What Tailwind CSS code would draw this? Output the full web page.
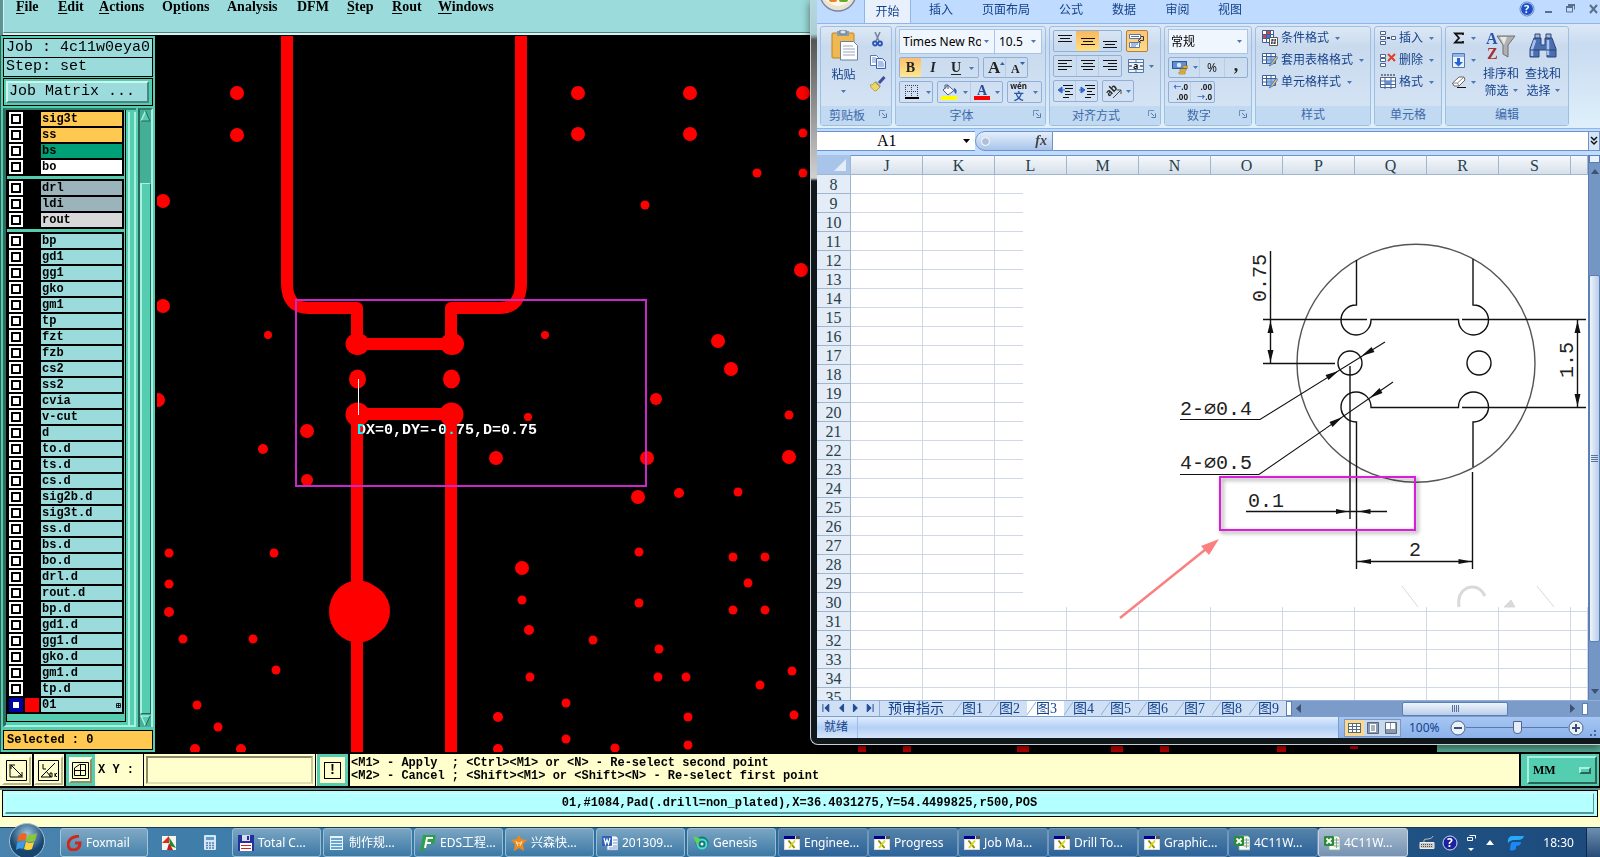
<!DOCTYPE html>
<html lang="zh-CN">
<head>
    <meta charset="UTF-8" />
    <meta name="viewport" content="width=device-width, initial-scale=1" />
    <title>Genesis - Graphic Editor</title>
    <script src="https://cdn.jsdelivr.net/npm/@tailwindcss/browser@4"></script>
</head>
<body class="h-screen flex flex-col overflow-hidden bg-black">

<!-- shared icons -->
<svg class="hidden">
    <symbol id="caret" viewBox="0 0 5 3"><path d="M0 0h5L2.500 3z" fill="#4a78b5"/></symbol>
    <symbol id="launcher" viewBox="0 0 8 8"><path d="M.5 6V.5H6" fill="none" stroke="#6a8fc0"/><path d="M3 3l3 3M7.500 3.500v4h-4" fill="none" stroke="#5479ab"/></symbol>
    <symbol id="xwin" viewBox="0 0 16 14"><path d="M0 0h16v14H0z" fill="#d8d8d8"/><path d="M0 0h11v3H0z" fill="#000090"/><path d="M12 0h4v3h-4z" fill="#555"/><path d="M1 3.500h14V13H1z" fill="#fff"/><path d="M4.500 4.500l6 7.500" stroke="#8b8b00" stroke-width="2"/><path d="M11 4.500L5 12" stroke="#d8d820" stroke-width="2"/></symbol>
    <symbol id="excel" viewBox="0 0 16 16"><path d="M5 1h9l2 2v12H5z" fill="#f4f8f4" stroke="#8fae92" stroke-width=".8"/><path d="M10 5h5M10 8h5M10 11h5M12.500 3v10" stroke="#88a88c"/><rect y="1" width="10" height="10" rx="1" fill="#2c8a3a"/><path d="M2.500 3.500l5 5M7.500 3.500l-5 5" stroke="#fff" stroke-width="1.800"/></symbol>
    <symbol id="tablepen" viewBox="0 0 16 14"><path d="M.5.500h13v10H.5z" fill="#fff" stroke="#3c5f94"/><path d="M0 3.500h14M0 7h14M4.500 0v11M9 0v11" stroke="#3c5f94"/><path d="M5 4h8v6H5z" fill="#6d9ce0" fill-opacity=".7"/><path d="M14.500 3L10 9l-3 4 4-2 4.500-6z" fill="#f0c850" stroke="#3a6ec0" stroke-width=".8"/></symbol>
</svg>

<div class="flex-1 min-h-0 flex flex-col relative">
    <!-- menu bar -->
    <nav class="h-[36px] shrink-0 bg-[#9bdbdb] border-l-3 border-[#5c9494] border-b border-b-black">
        <div class="h-[35px] border-b-2 border-[#d8f2f2]">
            <div class="h-[33px] border-b border-b-[#4c8484] border-l border-l-[#d8f2f2] pl-[12px] grid grid-cols-[42px_41px_63px_65px_70px_50px_45px_46px_auto] items-start justify-start leading-[14px] text-[14px] font-bold font-['Liberation_Serif',serif] text-black">
                <button class="text-left"><u class="underline-offset-2">F</u>ile</button>
                <button class="text-left"><u class="underline-offset-2">E</u>dit</button>
                <button class="text-left"><u class="underline-offset-2">A</u>ctions</button>
                <button class="text-left">O<u class="underline-offset-2">p</u>tions</button>
                <button class="text-left">Analysis</button>
                <button class="text-left">DFM</button>
                <button class="text-left"><u class="underline-offset-2">S</u>tep</button>
                <button class="text-left"><u class="underline-offset-2">R</u>out</button>
                <button class="text-left"><u class="underline-offset-2">W</u>indows</button>
            </div>
        </div>
    </nav>

    <div class="flex-1 min-h-0 flex">
        <!-- layer list -->
        <aside class="w-[155px] shrink-0 bg-[#55cdb0] border-l border-[#2d5f54] px-[2px] py-[2px] flex flex-col font-['Liberation_Mono',monospace] text-black">
            <div class="border border-black bg-[#9bdbdb] text-[15px] leading-[18px]">
                <div class="h-[19px] pl-[2px] border-b border-black whitespace-pre">Job : 4c11w0eya0</div>
                <div class="h-[18px] pl-[2px] whitespace-pre">Step: set</div>
            </div>
            <div class="mt-[1px] border border-black p-[2px] pr-[3px]">
                <button class="block w-full h-[22px] text-left text-[15px] leading-[18px] pl-[1px] bg-[#9bdbdb] border-2 border-t-[#cdf5ee] border-l-[#cdf5ee] border-r-[#4c8484] border-b-[#4c8484]">Job Matrix ...</button>
            </div>
            <div class="flex-1 min-h-0 mt-[2px] flex">
                <div class="flex-1 min-w-0 flex border-t-2 border-t-[#2f7d6b] border-l-3 border-l-[#2f6a5c] border-b-2 border-b-[#a8f0e0]">
                    <div class="w-[122px] flex flex-col border border-t-0 border-black mb-[3px]" id="layers"></div>
                    <div class="w-[8px] ml-[2px] mt-[2px] border-x-2 border-[#a8f0e0]"></div>
                </div>
                <div class="w-[15px] ml-[2px] bg-[#45ae96] border-l-2 border-l-[#2a6657] border-r-2 border-r-[#a8f0e0] border-t-2 border-t-[#2f7d6b] flex flex-col">
                    <svg class="w-[11px] h-[12px] shrink-0" viewBox="0 0 11 12"><path d="M5.500 1L10 11H1z" fill="#55cdb0"/><path d="M5.500 1L1 11" stroke="#a8f0e0" stroke-width="1.500"/><path d="M5.500 1L10 11H1" fill="none" stroke="#2a6657"/></svg>
                    <div class="h-[61px]"></div>
                    <div class="flex-1 bg-[#55cdb0] border-t border-l-2 border-t-[#a8f0e0] border-l-[#a8f0e0] border-r border-r-[#2a6657] border-b border-b-[#2a6657]"></div>
                    <svg class="w-[11px] h-[13px] shrink-0" viewBox="0 0 11 13"><path d="M5.500 12L10 2H1z" fill="#55cdb0"/><path d="M5.500 12L1 2h9" fill="none" stroke="#a8f0e0" stroke-width="1.500"/><path d="M5.500 12L10 2" stroke="#2a6657"/></svg>
                </div>
            </div>
            <div class="h-[20px] mt-[3px] border border-black bg-[#ffc850] text-[12px] leading-[18px] font-bold pl-[3px]">Selected : 0</div>
        </aside>

        <!-- board view -->
        <main class="flex-1 min-w-0 ml-[2px] bg-black">
            <svg class="block w-full h-full">
                <g transform="translate(-157 -36)">
                    <g fill="none" stroke="#f00" stroke-width="12" stroke-linejoin="round">
                        <path d="M287 30V283Q287 308 308 308H357V344H451V308H500Q521 308 521 283V30"/>
                        <path d="M357 760V414H451V760"/>
                    </g>
                    <g fill="#f00">
                        <ellipse cx="357.500" cy="344" rx="12" ry="11"/><ellipse cx="452" cy="344" rx="12" ry="11"/>
                        <ellipse cx="357.500" cy="379" rx="8.500" ry="9.500"/><ellipse cx="451.500" cy="379" rx="8.500" ry="9.500"/>
                        <circle cx="357.500" cy="414.500" r="12"/><circle cx="451.500" cy="414.500" r="12"/>
                        <ellipse cx="358" cy="611.500" rx="29" ry="31"/><circle cx="362" cy="611" r="28"/>
                        <g id="vias"></g>
                    </g>
                    <g fill="#b40000">
                        <path d="M858 746h8v6h-8zM903 746h8v6h-8zM1017 746h12v6h-12zM1111 746h12v6h-12zM1160 746h9v6h-9zM1277 746h9v6h-9zM1350 746h8v3h-8z"/>
                    </g>
                    <rect x="1437" y="735" width="2000" height="17" fill="#55a892"/>
                    <rect x="296" y="300" width="350" height="186" fill="none" stroke="#c828c8" stroke-width="2"/>
                    <path d="M358.500 379v36" stroke="#fff"/>
                    <text x="357" y="434" fill="#fff" class="mix-blend-difference text-[15px] font-bold font-['Liberation_Mono',monospace]">DX=0,DY=-0.75,D=0.75</text>
                </g>
            </svg>
        </main>
    </div>

    <!-- spreadsheet window -->
    <section class="absolute left-[810px] right-0 top-0 h-[745px] pl-[6px] pb-[6px] flex flex-col rounded-bl-lg border-l border-b border-[#c8d0d4] bg-[#10181c] shadow-[0_2px_8px_#0008] bg-[linear-gradient(#b4d8e0_0,#a8d0d4_34px,#555_40px,#d0d0d0_178px,#10181c_181px)] font-['Noto_Sans','Noto_Sans_CJK_SC',sans-serif] text-[12px] text-[#15428b] overflow-hidden">
        <div class="flex-1 min-h-0 flex flex-col bg-[#bfdbff]">
            <!-- ribbon tabs -->
            <div class="h-[23px] shrink-0 flex items-start leading-[19px]">
                <div class="w-[47px] h-[23px] shrink-0 overflow-hidden">
                    <svg class="block w-[47px] h-[23px]" viewBox="0 0 47 23"><circle cx="21" cy="-7" r="18" fill="#e9e3d2" stroke="#7d86a0" stroke-width="1.500"/><circle cx="21" cy="-9" r="15" fill="#fbf6e6"/><rect x="12" y="-6" width="8" height="8" rx="2" fill="#f08020"/><rect x="22" y="-7" width="9" height="9" rx="2" fill="#6aa82c"/></svg>
                </div>
                <button class="w-[47px] h-[23px] leading-[19px] bg-[#e8f1fb] border-x border-[#8fb6e6]">开始</button>
                <button class="w-[60px] leading-[19px]">插入</button>
                <button class="w-[70px] leading-[19px]">页面布局</button>
                <button class="w-[60px] leading-[19px]">公式</button>
                <button class="w-[46px] leading-[19px]">数据</button>
                <button class="w-[61px] leading-[19px]">审阅</button>
                <button class="w-[44px] leading-[19px]">视图</button>
                <div class="flex-1"></div>
                <svg class="w-[82px] h-[20px] shrink-0" viewBox="0 0 82 20">
                    <circle cx="9" cy="9" r="6.500" fill="#1b50c8" stroke="#fff"/><circle cx="9" cy="9" r="7" fill="none" stroke="#5b80c0"/>
                    <text x="6" y="13" fill="#fff" class="text-[11px] font-bold">?</text>
                    <path d="M27 12h7" stroke="#5a6f8c" stroke-width="2"/>
                    <path d="M50.500 5.500h6v4M48.500 7h6v5h-6z" fill="none" stroke="#5a6f8c"/><path d="M48 7h7M50 5h7" stroke="#5a6f8c" stroke-width="2"/>
                    <path d="M72 5l7 8M79 5l-7 8" stroke="#5a6f8c" stroke-width="2"/>
                </svg>
            </div>

            <!-- ribbon -->
            <div class="h-[106px] shrink-0 border-t border-b border-t-[#8fb6e6] border-b-[#8fb6e6] bg-linear-to-b from-[#dce8f6] via-[#c8dbf0] via-20% to-[#dff0fb] pl-[3px] pt-[2px] pb-[2px] flex gap-[3px]">
                <div class="w-[72px] shrink-0 flex flex-col border border-[#9fbfe2] rounded-[3px] bg-linear-to-b from-[#dde8f5] via-[#c9daee] via-20% to-[#d7e6f6]">
                    <div class="flex-1 flex pt-[3px]">
                        <button class="w-[45px] flex flex-col items-center leading-[14px]">
                            <svg class="w-[28px] h-[31px] ml-[2px]" viewBox="0 0 28 31"><rect x="1" y="3" width="22" height="25" rx="1" fill="#f0b850" stroke="#b98428"/><path d="M6 1h12v5H6z" fill="#8c9cac"/><path d="M9 0h6v4H9z" fill="#dde4ea" stroke="#65758a"/><path d="M9.500 11.500h13l4 4v14.500h-17z" fill="#fff" stroke="#6b7f9e"/><path d="M12 16h10M12 19h12M12 22h12M12 25h12" stroke="#9aa8bc"/></svg>
                            <span class="mt-[7px]">粘贴</span>
                            <svg class="w-[5px] h-[3px] mt-[8px]"><use href="#caret"/></svg>
                        </button>
                        <div class="flex flex-col gap-[6px] pl-[4px] pt-[2px]">
                            <button aria-label="剪切"><svg class="w-[16px] h-[16px]" viewBox="0 0 16 16"><path d="M5 0l4 9M10 0L6 9" stroke="#73839a" stroke-width="1.500"/><circle cx="5" cy="11.500" r="2" fill="none" stroke="#2b55b8" stroke-width="1.800"/><circle cx="10" cy="11.500" r="2" fill="none" stroke="#2b55b8" stroke-width="1.800"/></svg></button>
                            <button aria-label="复制"><svg class="w-[16px] h-[16px]" viewBox="0 0 16 16"><path d="M.5 1.500h6l2 2v8h-8z" fill="#fff" stroke="#5577b8"/><path d="M6.500 4.500h6l3 3v7h-9z" fill="#e8f0fc" stroke="#3c61ac"/><path d="M2 4h4M2 6h4M2 8h4M8 8h5M8 10h6M8 12h6" stroke="#6f8fd0"/></svg></button>
                            <button aria-label="格式刷"><svg class="w-[16px] h-[16px]" viewBox="0 0 16 16"><path d="M14.500 1L9 7" stroke="#3d4f9e" stroke-width="3"/><path d="M6 5l5 5-2 2-5-5z" fill="#98a3b5"/><path d="M5 6l5 5-4 4c-2 0-5-3-6-6 2 0 4-1 5-3z" fill="#ecd860" stroke="#a08a28" stroke-width=".7"/></svg></button>
                        </div>
                    </div>
                    <div class="h-[19px] bg-[#c1d9f1] text-[#3e6aaa] flex items-center"><span class="flex-1 text-center leading-[18px] pr-[6px]">剪贴板</span><svg class="w-[8px] h-[8px] mr-[4px] mb-[4px]"><use href="#launcher"/></svg></div>
                </div>

                <div class="w-[151px] shrink-0 flex flex-col border border-[#9fbfe2] rounded-[3px] bg-linear-to-b from-[#dde8f5] via-[#c9daee] via-20% to-[#d7e6f6]">
                    <div class="flex-1 flex flex-col gap-[3px] pt-[2px] px-[3px]">
                        <div class="h-[25px] flex border border-[#a9c5e6] bg-[#f0f6fd] text-black">
                            <label class="w-[95px] flex items-center border-r border-[#a9c5e6]"><select aria-label="字体" class="appearance-none w-[81px] pl-[3px] overflow-hidden"><option>Times New Roman</option></select><svg class="w-[5px] h-[3px] ml-[3px]"><use href="#caret"/></svg></label>
                            <label class="flex-1 flex items-center"><select aria-label="字号" class="appearance-none w-[35px] pl-[4px]"><option>10.5</option></select><svg class="w-[5px] h-[3px] ml-[1px]"><use href="#caret"/></svg></label>
                        </div>
                        <div class="h-[21px] flex gap-[4px] font-['Liberation_Serif',serif] text-[#222]">
                            <div class="w-[80px] flex border border-[#8fafd8] rounded-[2px]">
                                <button class="w-[21px] bg-linear-to-b from-[#f8c070] to-[#fde890] font-bold text-[14px] leading-[18px]">B</button>
                                <button class="w-[24px] italic font-bold text-[14px] leading-[18px]">I</button>
                                <button class="w-[22px] font-bold text-[14px] leading-[18px] underline underline-offset-2">U</button>
                                <svg class="w-[5px] h-[3px] mt-[9px] ml-[2px]"><use href="#caret"/></svg>
                            </div>
                            <div class="w-[45px] flex border border-[#8fafd8] rounded-[2px]">
                                <button class="w-[22px] flex font-bold text-[17px] leading-[20px] pl-[4px] border-r border-[#b6cde8]">A<svg class="w-[5px] h-[3px] mt-[4px]" viewBox="0 0 5 3"><path d="M0 3h5L2.500 0z" fill="#2c5fb0"/></svg></button>
                                <button class="flex font-bold text-[12px] leading-[22px] pl-[5px]">A<svg class="w-[5px] h-[3px] mt-[4px]" viewBox="0 0 5 3"><path d="M0 0h5L2.500 3z" fill="#2c5fb0"/></svg></button>
                            </div>
                        </div>
                        <div class="h-[22px] flex gap-[4px]">
                            <button aria-label="边框" class="w-[34px] flex items-center pl-[5px] gap-[7px] border border-[#8fafd8] rounded-[2px]"><svg class="w-[14px] h-[14px]" viewBox="0 0 14 14"><path d="M.5 0v13M6.500 0v13M12.500 0v13M0 .5h13M0 6.500h13" stroke="#33415e" stroke-dasharray="1 1"/><path d="M0 13h14" stroke="#000" stroke-width="2"/></svg><svg class="w-[5px] h-[3px]"><use href="#caret"/></svg></button>
                            <div class="w-[67px] flex border border-[#8fafd8] rounded-[2px]">
                                <button aria-label="填充颜色" class="w-[33px] flex items-center gap-[5px] pl-[3px] border-r border-[#b6cde8]"><svg class="w-[17px] h-[16px]" viewBox="0 0 17 16"><path d="M7 1.500l6 5-6 4.500-5-5z" fill="#f5f8fc" stroke="#4b5f84"/><path d="M4 5V1h3v4" fill="none" stroke="#4b5f84"/><path d="M13 4c3 1 3 4 2 6-2-1-2-4-2-6z" fill="#2e60b8"/><path d="M0 12h16v4H0z" fill="#ff0"/></svg><svg class="w-[5px] h-[3px]"><use href="#caret"/></svg></button>
                                <button aria-label="字体颜色" class="flex items-center gap-[5px] pl-[3px]"><svg class="w-[16px] h-[16px] overflow-visible" viewBox="0 0 16 16"><text x="3" y="11" fill="#27509a" class="font-bold text-[14px] font-['Liberation_Serif',serif]">A</text><path d="M0 12h16v4H0z" fill="#f00"/></svg><svg class="w-[5px] h-[3px]"><use href="#caret"/></svg></button>
                            </div>
                            <button class="w-[35px] flex items-center pl-[2px] gap-[4px] border border-[#8fafd8] rounded-[2px]"><span class="flex flex-col items-center text-[#222]"><span class="text-[8px] leading-[8px] font-bold">wén</span><span class="text-[10px] leading-[12px] font-bold text-[#2654a8]">文</span></span><svg class="w-[5px] h-[3px] ml-[2px]"><use href="#caret"/></svg></button>
                        </div>
                    </div>
                    <div class="h-[19px] bg-[#c1d9f1] text-[#3e6aaa] flex items-center"><span class="flex-1 text-center leading-[18px] pr-[6px]">字体</span><svg class="w-[8px] h-[8px] mr-[4px] mb-[4px]"><use href="#launcher"/></svg></div>
                </div>

                <div class="w-[112px] shrink-0 flex flex-col border border-[#9fbfe2] rounded-[3px] bg-linear-to-b from-[#dde8f5] via-[#c9daee] via-20% to-[#d7e6f6]">
                    <div class="flex-1 flex flex-col gap-[3px] pt-[3px] pl-[3px]">
                        <div class="flex gap-[4px] h-[22px]">
                            <div class="w-[69px] flex border border-[#8fafd8] rounded-[2px]">
                                <button aria-label="顶端对齐" class="w-[22px] pl-[4px]"><svg class="w-[14px] h-[18px]" viewBox="0 0 14 18"><path d="M0 3.500h14M2 6.500h10M0 9.500h14" stroke="#111"/></svg></button>
                                <button aria-label="垂直居中" class="w-[23px] pl-[5px] bg-linear-to-b from-[#f8b860] to-[#fde080]"><svg class="w-[14px] h-[18px]" viewBox="0 0 14 18"><path d="M0 6.500h14M2 9.500h10M0 12.500h14" stroke="#111"/></svg></button>
                                <button aria-label="底端对齐" class="w-[22px] pl-[4px]"><svg class="w-[14px] h-[18px]" viewBox="0 0 14 18"><path d="M0 9.500h14M2 12.500h10M0 15.500h14" stroke="#111"/></svg></button>
                            </div>
                            <button aria-label="自动换行" class="w-[22px] pl-[2px] border border-[#b08038] rounded-[2px] bg-linear-to-b from-[#fbc478] to-[#fdd98c]"><svg class="w-[16px] h-[16px]" viewBox="0 0 16 16"><path d="M.5 1.500h11v4H.5zM.5 9.500h10v5H.5z" fill="#fff" stroke="#5479ab"/><path d="M2 3.500h8M2 11h7M2 13h5" stroke="#5479ab"/><path d="M12 3.500h2.500v4H11" fill="none" stroke="#333"/><path d="M12 5l-3 2.500 3 2" fill="none" stroke="#333"/></svg></button>
                        </div>
                        <div class="flex gap-[4px] h-[22px]">
                            <div class="w-[69px] flex border border-[#8fafd8] rounded-[2px]">
                                <button aria-label="左对齐" class="w-[22px] pl-[4px]"><svg class="w-[14px] h-[18px]" viewBox="0 0 14 18"><path d="M0 3.500h14M0 6.500h9M0 9.500h14M0 12.500h9" stroke="#111"/></svg></button>
                                <button aria-label="居中" class="w-[23px] pl-[4px] border-x border-[#b6cde8]"><svg class="w-[14px] h-[18px]" viewBox="0 0 14 18"><path d="M0 3.500h14M2 6.500h10M0 9.500h14M2 12.500h10" stroke="#111"/></svg></button>
                                <button aria-label="右对齐" class="w-[22px] pl-[4px]"><svg class="w-[14px] h-[18px]" viewBox="0 0 14 18"><path d="M0 3.500h14M5 6.500h9M0 9.500h14M5 12.500h9" stroke="#111"/></svg></button>
                            </div>
                            <button aria-label="合并后居中" class="flex items-center gap-[5px] pl-[2px]"><svg class="w-[16px] h-[14px]" viewBox="0 0 16 14"><path d="M.5.500h15v13H.5zM.5 3.500h15M.5 10.500h15M8 0v3.500M8 10.500V14" fill="#eef4fc" stroke="#5479ab"/><path d="M1 7h3M12 7h3" stroke="#111"/><text x="5" y="10" fill="#111" class="text-[9px] font-bold">a</text></svg><svg class="w-[5px] h-[3px]"><use href="#caret"/></svg></button>
                        </div>
                        <div class="flex gap-[4px] h-[22px]">
                            <div class="w-[45px] flex border border-[#8fafd8] rounded-[2px]">
                                <button aria-label="减少缩进量" class="w-[22px] pl-[3px] border-r border-[#b6cde8]"><svg class="w-[16px] h-[16px]" viewBox="0 0 16 16"><path d="M6 2.500h10M8 5.500h8M8 8.500h5M8 11.500h8M6 14.500h6" stroke="#111"/><path d="M5 4L1 7l4 3zM4 7h4" fill="#2f66c8" stroke="#2f66c8"/></svg></button>
                                <button aria-label="增加缩进量" class="pl-[3px]"><svg class="w-[16px] h-[16px]" viewBox="0 0 16 16"><path d="M6 2.500h10M8 5.500h8M8 8.500h5M8 11.500h8M6 14.500h6" stroke="#111"/><path d="M2 4l4 3-4 3zM0 7h3" fill="#2f66c8" stroke="#2f66c8"/></svg></button>
                            </div>
                            <button aria-label="方向" class="w-[32px] flex items-center pl-[4px] gap-[3px] border border-[#8fafd8] rounded-[2px]"><svg class="w-[16px] h-[18px] overflow-visible" viewBox="0 0 16 18"><text x="-2" y="11" transform="rotate(-45 5 8)" fill="#222" class="text-[10px] font-bold">ab</text><path d="M6 16l8-8M14 12V8h-4" fill="none" stroke="#444"/></svg><svg class="w-[5px] h-[3px]"><use href="#caret"/></svg></button>
                        </div>
                    </div>
                    <div class="h-[19px] bg-[#c1d9f1] text-[#3e6aaa] flex items-center"><span class="flex-1 text-center leading-[18px] pr-[6px]">对齐方式</span><svg class="w-[8px] h-[8px] mr-[4px] mb-[4px]"><use href="#launcher"/></svg></div>
                </div>

                <div class="w-[88px] shrink-0 flex flex-col border border-[#9fbfe2] rounded-[3px] bg-linear-to-b from-[#dde8f5] via-[#c9daee] via-20% to-[#d7e6f6]">
                    <div class="flex-1 flex flex-col gap-[3px] pt-[2px] px-[3px]">
                        <label class="h-[25px] flex items-center border border-[#a9c5e6] bg-[#f0f6fd] text-black"><select aria-label="数字格式" class="appearance-none w-[68px] pl-[2px]"><option>常规</option></select><svg class="w-[5px] h-[3px]"><use href="#caret"/></svg></label>
                        <div class="h-[21px] flex border border-[#8fafd8] rounded-[2px] text-[#222]">
                            <button aria-label="会计数字格式" class="w-[31px] flex items-center pl-[3px] gap-[5px] border-r border-[#b6cde8]"><svg class="w-[16px] h-[16px]" viewBox="0 0 16 16"><rect x=".5" y="1.500" width="14" height="7" fill="#5e8fd8" stroke="#2f5498"/><circle cx="7" cy="5" r="2.200" fill="#dbe8fb"/><path d="M8 9h6v2H8zM7 12h6v2H7zM11 6h5v2h-5z" fill="#f2c648" stroke="#a97c1c" stroke-width=".7"/></svg><svg class="w-[5px] h-[3px]"><use href="#caret"/></svg></button>
                            <button class="w-[25px] leading-[19px] border-r border-[#b6cde8]">%</button>
                            <button class="w-[22px] h-[19px] leading-[8px] pb-[6px] font-bold font-['Liberation_Serif',serif] text-[18px]">,</button>
                        </div>
                        <div class="h-[22px] w-[47px] flex border border-[#8fafd8] rounded-[2px] text-[#222] font-bold text-[8px] leading-[10px]">
                            <button class="w-[22px] border-r border-[#b6cde8] text-right pr-[2px]"><span class="text-[#2f66c8]">←</span>.0<br>.00</button>
                            <button class="w-[22px] text-right pr-[1px]">.00<br><span class="text-[#2f66c8]">→</span>.0</button>
                        </div>
                    </div>
                    <div class="h-[19px] bg-[#c1d9f1] text-[#3e6aaa] flex items-center"><span class="flex-1 text-center leading-[18px] pr-[6px]">数字</span><svg class="w-[8px] h-[8px] mr-[4px] mb-[4px]"><use href="#launcher"/></svg></div>
                </div>

                <div class="w-[116px] shrink-0 flex flex-col border border-[#9fbfe2] rounded-[3px] bg-linear-to-b from-[#dde8f5] via-[#c9daee] via-20% to-[#d7e6f6]">
                    <div class="flex-1 flex flex-col pl-[6px] items-start">
                        <button class="h-[22px] flex items-center gap-[3px]"><svg class="w-[16px] h-[16px]" viewBox="0 0 16 16"><path d="M.5.500h11v12H.5z" fill="#fff" stroke="#3c5f94"/><path d="M0 4.500h12M0 8.500h12M4.500 0v13M8.500 0v13" stroke="#3c5f94"/><path d="M5 1h3v3H5zM1 5h3v3H1z" fill="#d84040"/><path d="M5 5h3v3H5z" fill="#4070d0"/><path d="M7.500 7.500h8v8h-8z" fill="#fff" stroke="#555"/><path d="M9 10h5M9 13h5M10.500 9l-1 5M13.500 9l-1 5" stroke="#333"/></svg>条件格式<svg class="w-[5px] h-[3px] ml-[3px]"><use href="#caret"/></svg></button>
                        <button class="h-[22px] flex items-center gap-[3px]"><svg class="w-[16px] h-[14px]"><use href="#tablepen"/></svg>套用表格格式<svg class="w-[5px] h-[3px] ml-[3px]"><use href="#caret"/></svg></button>
                        <button class="h-[22px] flex items-center gap-[3px]"><svg class="w-[16px] h-[14px]"><use href="#tablepen"/></svg>单元格样式<svg class="w-[5px] h-[3px] ml-[3px]"><use href="#caret"/></svg></button>
                    </div>
                    <div class="h-[19px] bg-[#c1d9f1] text-[#3e6aaa] text-center leading-[18px]">样式</div>
                </div>

                <div class="w-[68px] shrink-0 flex flex-col border border-[#9fbfe2] rounded-[3px] bg-linear-to-b from-[#dde8f5] via-[#c9daee] via-20% to-[#d7e6f6]">
                    <div class="flex-1 flex flex-col pl-[5px] items-start">
                        <button class="h-[22px] flex items-center gap-[3px]"><svg class="w-[16px] h-[14px]" viewBox="0 0 16 14"><path d="M.5.500h5v3h-5zM.5 5.500h5v3h-5zM.5 10.500h5v3h-5zM11.500 5.500h4v3h-4z" fill="#fff" stroke="#4a6390"/><path d="M7 7h3" stroke="#111" stroke-width="1.500"/></svg>插入<svg class="w-[5px] h-[3px] ml-[3px]"><use href="#caret"/></svg></button>
                        <button class="h-[22px] flex items-center gap-[3px]"><svg class="w-[16px] h-[14px]" viewBox="0 0 16 14"><path d="M.5 1.500h5v3h-5zM.5 5.500h5v3h-5zM.5 10.500h5v3h-5z" fill="#fff" stroke="#4a6390"/><path d="M8 1l7 7M15 1L8 8" stroke="#e04028" stroke-width="2"/></svg>删除<svg class="w-[5px] h-[3px] ml-[3px]"><use href="#caret"/></svg></button>
                        <button class="h-[22px] flex items-center gap-[3px]"><svg class="w-[16px] h-[16px]" viewBox="0 0 16 16"><path d="M.5 3.500h15v10H.5z" fill="#fff" stroke="#4a6390"/><path d="M0 7h16M0 10.500h16M5 3v12M11 3v12" stroke="#4a6390"/><path d="M5 7h6v3.500H5z" fill="#5a8ee0"/><path d="M1 1h14" stroke="#222" stroke-dasharray="2 1"/></svg>格式<svg class="w-[5px] h-[3px] ml-[3px]"><use href="#caret"/></svg></button>
                    </div>
                    <div class="h-[19px] bg-[#c1d9f1] text-[#3e6aaa] text-center leading-[18px]">单元格</div>
                </div>

                <div class="w-[124px] shrink-0 flex flex-col border border-[#9fbfe2] rounded-[3px] bg-linear-to-b from-[#dde8f5] via-[#c9daee] via-20% to-[#d7e6f6]">
                    <div class="flex-1 flex">
                        <div class="w-[34px] flex flex-col pl-[6px]">
                            <button aria-label="自动求和" class="h-[22px] flex items-center gap-[5px]"><svg class="w-[14px] h-[12px]" viewBox="0 0 14 12"><path d="M11 3V1.500H3L7 6l-4 4.500h8V9" fill="none" stroke="#111" stroke-width="1.800"/></svg><svg class="w-[5px] h-[3px]"><use href="#caret"/></svg></button>
                            <button aria-label="填充" class="h-[22px] flex items-center gap-[5px]"><svg class="w-[14px] h-[15px]" viewBox="0 0 14 15"><path d="M.5.500h12v14H.5z" fill="#e8f1fc" stroke="#5479ab"/><path d="M1 1h11v3H1z" fill="#8fb4ea"/><path d="M5 5h3v4h3l-4.500 4.500L2 9h3z" fill="#2563d8"/></svg><svg class="w-[5px] h-[3px]"><use href="#caret"/></svg></button>
                            <button aria-label="清除" class="h-[22px] flex items-center gap-[5px]"><svg class="w-[14px] h-[12px]" viewBox="0 0 14 12"><path d="M7 1h5l1 3-6 6H2L.5 7z" fill="#fff" stroke="#666"/><path d="M.5 7h5L7 10M5.500 7L12 1" fill="none" stroke="#888"/><path d="M5 11.500h9" stroke="#111"/></svg><svg class="w-[5px] h-[3px]"><use href="#caret"/></svg></button>
                        </div>
                        <button class="w-[42px] flex flex-col items-center leading-[17px] pt-[5px] whitespace-nowrap">
                            <svg class="w-[30px] h-[29px] overflow-visible" viewBox="0 0 30 29"><text x="0" y="12" fill="#2b55a8" class="text-[16px] font-bold font-['Liberation_Serif',serif]">A</text><text x="1" y="27" fill="#a83232" class="text-[16px] font-bold font-['Liberation_Serif',serif]">Z</text><path d="M11 4h18l-7 9v12l-5-3v-9z" fill="#b0b0b0" stroke="#707070"/><path d="M14 5h7l-3 8z" fill="#e8e8e8"/></svg>
                            <span class="mt-[4px]">排序和</span>
                            <span class="flex items-center gap-[4px]">筛选<svg class="w-[5px] h-[3px]"><use href="#caret"/></svg></span>
                        </button>
                        <button class="w-[42px] flex flex-col items-center leading-[17px] pt-[5px] whitespace-nowrap">
                            <svg class="w-[28px] h-[29px]" viewBox="0 0 28 29"><path d="M5 6h7v7h4V6h7l4 11v8h-9v-7h-8v7H1v-8z" fill="#4a6fb0" stroke="#2b4478"/><path d="M6 2h5v4H6zM17 2h5v4h-5z" fill="#a8b8d4" stroke="#2b4478"/><path d="M6 8l-3 9v7M19 8v15" stroke="#a9c2ee" stroke-width="2.500" fill="none"/><path d="M1 18h9M18 18h9" stroke="#2b4478"/></svg>
                            <span class="mt-[4px]">查找和</span>
                            <span class="flex items-center gap-[4px]">选择<svg class="w-[5px] h-[3px]"><use href="#caret"/></svg></span>
                        </button>
                    </div>
                    <div class="h-[19px] bg-[#c1d9f1] text-[#3e6aaa] text-center leading-[18px]">编辑</div>
                </div>
            </div>

            <!-- formula bar -->
            <div class="h-[26px] shrink-0 pt-[2px] pb-[4px] flex">
                <div class="w-[158px] h-[20px] flex items-center bg-white border-y border-[#6f93c4]">
                    <input aria-label="名称框" value="A1" class="w-[144px] pl-[60px] outline-none text-black text-[16px] leading-[18px] h-[18px] font-['Liberation_Serif',serif]" />
                    <svg class="w-[7px] h-[4px] ml-[2px]" viewBox="0 0 7 4"><path d="M0 0h7L3.500 4z" fill="#000"/></svg>
                </div>
                <div class="w-[78px] h-[20px] flex items-center justify-between pl-[5px] pr-[5px] rounded-l-[10px] border border-[#6f93c4] bg-linear-to-b from-[#e4effc] to-[#a9c4ea]">
                    <span class="w-[9px] h-[9px] rounded-full bg-[#aebfd8] border border-white"></span>
                    <button class="italic font-bold text-[#444] text-[14px] leading-[16px] font-['Liberation_Serif',serif]">fx</button>
                </div>
                <input aria-label="编辑栏" class="flex-1 min-w-0 h-[20px] bg-white border-y border-[#6f93c4] outline-none" />
                <button aria-label="展开" class="w-[12px] h-[20px] border border-[#6f93c4] bg-[#d6e5f8]"><svg class="w-[10px] h-[12px]" viewBox="0 0 10 12"><path d="M2 2l3 3 3-3M2 6l3 3 3-3" fill="none" stroke="#111" stroke-width="1.500"/></svg></button>
            </div>

            <!-- sheet -->
            <div class="flex-1 min-h-0 flex">
                <div class="flex-1 min-w-0 relative overflow-hidden bg-white">
                    <table class="w-full table-fixed border-separate border-spacing-0 text-[16px] leading-[17px] text-[#26404a] font-['Liberation_Serif',serif]">
                        <colgroup><col class="w-[34px]"><col class="w-[72px]"><col class="w-[72px]"><col class="w-[72px]"><col class="w-[72px]"><col class="w-[72px]"><col class="w-[72px]"><col class="w-[72px]"><col class="w-[72px]"><col class="w-[72px]"><col class="w-[72px]"><col></colgroup>
                        <thead><tr id="cols"></tr></thead>
                        <tbody id="rows"></tbody>
                    </table>
                    <!-- embedded drawing -->
                    <svg class="absolute left-[206px] top-[20px] w-[565px] h-[432px] overflow-visible">
                        <rect width="565" height="432" fill="#fff"/>
                        <g transform="translate(-1023 -175)">
                            <g fill="none" stroke="#111" stroke-width="1.400">
                                <circle cx="1416" cy="363.300" r="119" stroke="#555"/>
                                <path d="M1356.500 260V305A15 15 0 1 0 1371 319.500H1458.500A15 15 0 1 0 1473 305V259"/>
                                <path d="M1356.500 467V422A15 15 0 1 1 1371 407.500H1458.500A15 15 0 1 1 1473 422V467"/>
                                <circle cx="1350" cy="363" r="12"/><circle cx="1479" cy="363" r="12"/>
                                <path d="M1263 319.500H1367M1263 363.500H1335M1270.500 251V363M1462 319.500H1586M1462 407.500H1586M1577.500 319V407"/>
                                <path d="M1180 419.500H1260L1385 342M1180 474.500H1259L1393 382" stroke-width="1.100"/>
                                <path d="M1350 366V519M1356.500 467V569M1472.500 472V569M1246 511.500H1387M1357 561.500H1472"/>
                            </g>
                            <g fill="#111">
                                <path d="M1270.500 321l-3 12h6zM1270.500 362l-3-12h6zM1577.500 321l-3 12h6zM1577.500 406l-3-12h6z"/>
                                <path d="M1338.500 371l-13 4 3 5zM1361.500 356l13-4-3-5zM1342.500 417l-13 5 3 5zM1369.500 398l13-5-3-5z"/>
                                <path d="M1348 511.500l-12-2.500v5zM1358.500 511.500l12-2.500v5zM1358 561.500l13-2.500v5zM1471.500 561.500l-13-2.500v5z"/>
                            </g>
                            <g fill="#222" class="text-[20px] font-['Liberation_Mono',monospace]">
                                <text x="1180" y="415">2-⌀0.4</text>
                                <text x="1180" y="469">4-⌀0.5</text>
                                <text x="1248" y="507">0.1</text>
                                <text x="1409" y="556">2</text>
                                <text transform="translate(1266 302) rotate(-90)">0.75</text>
                                <text transform="translate(1573 378) rotate(-90)">1.5</text>
                            </g>
                            <g fill="none" stroke="#d9d9d9">
                                <path d="M1402 586l16 21M1537 586l17 21"/>
                                <path d="M1459 607q-2-14 8-19 12-4 18 8" stroke-width="3"/><path d="M1504 607l7-7 4 7z" fill="#d9d9d9"/>
                            </g>
                            <rect x="1220" y="477" width="195" height="53" fill="none" stroke="#d81ed8" stroke-width="2" class="drop-shadow-[2px_2px_2px_#0007]"/>
                            <path d="M1120 618L1206 549" stroke="#fa8080" stroke-width="2.500"/><path d="M1219 539l-18 7 8 9z" fill="#fa8080"/>
                        </g>
                    </svg>
                </div>
                <div class="w-[12px] shrink-0 flex flex-col items-center bg-[#7396c4] border-l border-[#5a7fb4]">
                    <div class="w-full h-[8px] bg-[#e8f0fa] border border-[#5a7fb4]"></div>
                    <svg class="w-[8px] h-[5px] mt-[6px] shrink-0" viewBox="0 0 8 5"><path d="M4 0l4 5H0z" fill="#3c5174"/></svg>
                    <div class="mt-[101px] h-[367px] w-full flex flex-col items-center justify-center gap-[1px] rounded-[2px] border border-[#5a7fb4] bg-linear-to-r from-[#eef4fb] to-[#b9cde8]">
                        <i class="w-[7px] h-px bg-[#56739e]"></i><i class="w-[7px] h-px bg-[#56739e]"></i><i class="w-[7px] h-px bg-[#56739e]"></i><i class="w-[7px] h-px bg-[#56739e]"></i>
                    </div>
                    <svg class="w-[8px] h-[5px] mt-auto mb-[6px] shrink-0" viewBox="0 0 8 5"><path d="M4 5l4-5H0z" fill="#3c5174"/></svg>
                </div>
            </div>

            <!-- sheet tabs -->
            <div class="h-[16px] shrink-0 flex bg-[#cfe0f5] border-t border-[#8fafd8]">
                <svg class="w-[63px] h-[15px] shrink-0 border-r border-[#8fafd8]" viewBox="0 0 63 15"><path d="M6 3v8M12 3v8L8 7zM27 3v8l-4-4zM37 3v8l4-4zM51 3v8l4-4zM57 3v8" fill="#204a94" stroke="#204a94"/></svg>
                <div id="tabs" class="flex text-[14px] leading-[15px] font-['Liberation_Serif','Noto_Sans_CJK_SC',serif]"></div>
                <div class="w-[6px] bg-white border border-[#5a7fb4]"></div>
                <div class="flex-1 flex items-center bg-[#7b9bc9] pl-[4px]">
                    <svg class="w-[5px] h-[9px]" viewBox="0 0 5 9"><path d="M5 0v9L0 4.500z" fill="#3c5174"/></svg>
                    <div class="ml-[101px] w-[106px] h-[14px] flex items-center justify-center gap-[1px] rounded-[2px] border border-[#5a7fb4] bg-linear-to-b from-[#eef4fb] to-[#b9cde8]"><i class="w-px h-[7px] bg-[#56739e]"></i><i class="w-px h-[7px] bg-[#56739e]"></i><i class="w-px h-[7px] bg-[#56739e]"></i><i class="w-px h-[7px] bg-[#56739e]"></i></div>
                    <svg class="w-[5px] h-[9px] ml-auto mr-[7px]" viewBox="0 0 5 9"><path d="M0 0v9l5-4.500z" fill="#3c5174"/></svg>
                    <div class="w-[6px] h-[12px] mr-[12px] bg-white border border-[#5a7fb4]"></div>
                </div>
            </div>

            <!-- status bar -->
            <div class="h-[22px] shrink-0 flex items-center bg-linear-to-b from-[#e0edfd] via-[#b4d0f5] to-[#d5e5fa] border-t border-[#7a9cce]">
                <span class="w-[41px] pl-[7px] leading-[20px] h-full border-r border-[#9dbbe4]">就绪</span>
                <div class="w-[262px] h-full ml-auto pl-[5px] flex items-center border-l border-[#7a9cce] bg-linear-to-b from-[#a6c6f3] to-[#8bb2ea]">
                    <div class="flex h-[18px] border border-[#7e98bd] bg-[#c8d8ee]">
                        <button aria-label="普通" class="w-[19px] flex items-center justify-center bg-[#fbd88c]"><svg class="w-[13px] h-[10px]" viewBox="0 0 13 10"><path d="M0 0h13v10H0z" fill="#fff"/><path d="M.5 0v10M4.500 0v10M8.500 0v10M12.500 0v10M0 .5h13M0 3.500h13M0 6.500h13M0 9.500h13" stroke="#55687f"/></svg></button>
                        <button aria-label="页面布局" class="w-[18px] flex items-center justify-center"><svg class="w-[12px] h-[12px]" viewBox="0 0 12 12"><path d="M.5.500h11v11H.5z" fill="#8a99ad" stroke="#55687f"/><path d="M3 2h6v8H3z" fill="#fff"/><path d="M4 4h4M4 6h4M4 8h4" stroke="#55687f"/></svg></button>
                        <button aria-label="分页预览" class="w-[18px] flex items-center justify-center"><svg class="w-[12px] h-[12px]" viewBox="0 0 12 12"><path d="M.5.500h11v11H.5z" fill="#8a99ad" stroke="#55687f"/><path d="M1 1h4v6H1zM6 1h4v6H6z" fill="#fff"/></svg></button>
                    </div>
                    <span class="ml-[8px] w-[41px]">100%</span>
                    <button aria-label="缩小"><svg class="block w-[16px] h-[16px]" viewBox="0 0 16 16"><circle cx="8" cy="8" r="7" fill="#e9f1fc" stroke="#50648a"/><path d="M4 8h8" stroke="#3c5174" stroke-width="2"/></svg></button>
                    <input type="range" aria-label="显示比例" value="50" class="w-[102px] h-[16px] appearance-none bg-transparent bg-[linear-gradient(#5a78ab,#5a78ab)] bg-[length:100%_1px] bg-no-repeat bg-center [&::-webkit-slider-thumb]:appearance-none [&::-webkit-slider-thumb]:w-[9px] [&::-webkit-slider-thumb]:h-[13px] [&::-webkit-slider-thumb]:bg-[#e3ecf8] [&::-webkit-slider-thumb]:border [&::-webkit-slider-thumb]:border-[#50648a] [&::-webkit-slider-thumb]:rounded-b-[4px]" />
                    <button aria-label="放大"><svg class="block w-[16px] h-[16px]" viewBox="0 0 16 16"><circle cx="8" cy="8" r="7" fill="#e9f1fc" stroke="#50648a"/><path d="M4 8h8M8 4v8" stroke="#3c5174" stroke-width="2"/></svg></button>
                    <svg class="w-[8px] h-[8px] mt-[10px] ml-[6px]" viewBox="0 0 8 8"><path d="M0 5h2v2H0zM4 5h2v2H4zM4 1h2v2H4z" fill="#3f66a5"/></svg>
                </div>
            </div>
        </div>
    </section>
</div>

<!-- command strip -->
<div class="h-[36px] shrink-0 border-y-2 border-black bg-[#ffffcd] flex items-stretch pl-[1px] font-['Liberation_Mono',monospace] text-black">
    <button aria-label="缩放" class="w-[33px] pl-[1px] border-r-2 border-black"><svg class="block w-[29px] h-[29px] p-[2px] border-2 border-[#fffff0] border-r-[#b8b690] border-b-[#b8b690]" viewBox="0 0 21 21"><path d="M.5.500h20v20H.5z" fill="none" stroke="#000"/><path d="M4 4v13h13" fill="none" stroke="#000"/><path d="M5 5l11 11M5 9V5h4M16 12v4h-4" fill="none" stroke="#000"/></svg></button>
    <button aria-label="角度" class="w-[32px] border-r-2 border-black"><svg class="block w-[29px] h-[29px] p-[2px] border-2 border-[#fffff0] border-r-[#b8b690] border-b-[#b8b690]" viewBox="0 0 21 21"><path d="M.5.500h20v20H.5z" fill="none" stroke="#000"/><path d="M3 17L17 3M3 17h9M5 4v5h3M8 11l5 6M12 13h2v4h-2zM17 13v4M19 13l-2 2 2 2" fill="none" stroke="#000"/></svg></button>
    <button aria-label="网格" class="w-[29px] border-3 border-[#55cdb0] bg-[#ffffcd]"><svg class="block w-[23px] h-[25px] border-2 border-[#fffff0] border-r-[#8d8f6a] border-b-[#8d8f6a]" viewBox="0 0 19 21"><path d="M1.500 2.500h16v16h-16z" fill="none" stroke="#000"/><path d="M3.500 8l5-3.500h6v11h-11zM3.500 10.500h11M9.500 4.500v11" fill="none" stroke="#000"/></svg></button>
    <label for="xy" class="w-[48px] pl-[3px] text-[12px] leading-[32px] font-bold whitespace-pre">X Y :</label>
    <div class="border-x border-black p-[2px] w-[173px]">
        <input id="xy" class="block w-full h-full px-[4px] bg-[#ffffcd] border-2 border-t-[#8c8a68] border-l-[#8c8a68] border-r-[#c9c79c] border-b-[#e0deb4] outline-none" />
    </div>
    <button class="w-[31px] ml-[1px] border-3 border-[#55cdb0] bg-[#ffffcd] flex items-center justify-center"><span class="w-[17px] h-[17px] border border-black text-[14px] leading-[15px] font-bold">!</span></button>
    <div class="flex-1 border-l-2 border-black pl-[1px] text-[12px] leading-[13px] font-bold whitespace-pre pt-[3px]">&lt;M1&gt; - Apply  ; &lt;Ctrl&gt;&lt;M1&gt; or &lt;N&gt; - Re-select second point
&lt;M2&gt; - Cancel ; &lt;Shift&gt;&lt;M1&gt; or &lt;Shift&gt;&lt;N&gt; - Re-select first point</div>
    <div class="w-[81px] border-l-2 border-r border-black bg-[#55cdb0] p-[2px] pl-[6px]">
        <button class="w-full h-full flex items-center justify-between pl-[4px] pr-[4px] text-[12px] font-bold font-['Liberation_Serif',serif] border-2 border-t-[#a8f0e0] border-l-[#a8f0e0] border-r-[#2a6657] border-b-[#2a6657]">MM<span class="w-[12px] h-[7px] border-2 border-t-[#a8f0e0] border-l-[#a8f0e0] border-r-[#2a6657] border-b-[#2a6657]"></span></button>
    </div>
</div>
<div class="h-[39px] shrink-0 bg-[#ffffcd] border-t-2 border-t-[#5c8a84] px-[2px]">
    <div class="h-[27px] border border-black bg-[#b4ffff] p-[2px] pr-[3px]">
        <div class="h-full border-l border-t border-[#d8ffff] border-b-2 border-b-[#5c9494] border-r border-r-[#5c9494] text-center text-[12px] leading-[19px] font-bold text-black font-['Liberation_Mono',monospace]">01,#1084,Pad(.drill=non_plated),X=36.4031275,Y=54.4499825,r500,POS</div>
    </div>
</div>

<!-- taskbar -->
<footer class="h-[30px] shrink-0 flex items-stretch bg-linear-to-r from-[#4a83ad] via-[#2f77a5] via-30% to-[#1d4a7d] border-t border-[#123a5c] pl-[8px] text-white text-[12px] font-['Noto_Sans','Noto_Sans_CJK_SC',sans-serif]">
    <button aria-label="开始" class="w-[38px] mr-[14px]">
        <svg class="block w-[38px] h-[36px] -mt-[6px]" viewBox="0 0 38 36"><defs><radialGradient id="orb" cy=".3"><stop offset="0" stop-color="#9fc6e0"/><stop offset="1" stop-color="#16456e"/></radialGradient></defs><circle cx="19" cy="19" r="17.500" fill="url(#orb)" stroke="#a8c4d6"/><path d="M11 13q4-3 8-1l-2 7q-4-2-8 1z" fill="#f0641e"/><path d="M20 12q4 2 9-1l-2 8q-5 2-9 0z" fill="#8cc63c"/><path d="M9 21q4-3 8-1l-2 7q-3-2-7 1z" fill="#3c9ce8"/><path d="M18 20q4 2 8 0l-2 7q-4 2-8 0z" fill="#ffd23c"/></svg>
    </button>
    <button class="w-[88px] flex items-center gap-[4px] pl-[6px] rounded-[3px] border border-[#a3c4da] bg-linear-to-b from-[#7fa8c4] to-[#4683ab]"><svg class="w-[15px] h-[16px] shrink-0" viewBox="0 0 15 16"><path d="M12 1Q2 2 1 9q0 6 6 6 6-1 6-7H8" fill="none" stroke="#d02818" stroke-width="3"/></svg>Foxmail</button>
    <button aria-label="相册" class="ml-[14px] w-[16px]"><svg class="w-[14px] h-[14px]" viewBox="0 0 14 14"><path d="M0 0h14v14H0z" fill="#f4f4f0"/><path d="M0 7L7 0v7z" fill="#e02818"/><path d="M7 1l7 11-6-2z" fill="#208a30"/><path d="M7 7l4 7H5z" fill="#c81818"/></svg></button>
    <button aria-label="计算器" class="ml-[26px] w-[12px]"><svg class="w-[12px] h-[15px]" viewBox="0 0 12 15"><rect width="12" height="15" rx="1" fill="#d5e6f4"/><path d="M2 2h8v3H2z" fill="#5f9ad0"/><path d="M2 8h8M2 10.500h8M2 13h8" stroke="#5080b0" stroke-dasharray="2 1" stroke-width="1.500"/></svg></button>
    <div id="tasks" class="ml-[16px] flex"></div>
    <div class="ml-auto flex items-center">
        <svg class="w-[16px] h-[14px] mr-[7px]" viewBox="0 0 16 14"><path d="M1 6.500h14v6H1z" fill="#c8c8c0" stroke="#eee"/><path d="M2 8.500h12M2 10.500h12" stroke="#555" stroke-dasharray="1 1"/><path d="M5 6V4q0-1 4-1t5-3" fill="none" stroke="#bbb"/></svg>
        <svg class="w-[16px] h-[16px] mr-[9px]" viewBox="0 0 16 16"><circle cx="8" cy="8" r="7" fill="#1a22a0" stroke="#d8d8f0"/><text x="5" y="12" fill="#fff" class="text-[12px] font-bold">?</text></svg>
        <svg class="w-[9px] h-[18px] mr-[10px]" viewBox="0 0 9 18"><path d="M2.500 1.500h6v3M.5 3.500h5v3h-5z" fill="none" stroke="#fff"/><path d="M1 14h6l-3 3z" fill="#fff"/></svg>
        <svg class="w-[8px] h-[5px] mr-[13px]" viewBox="0 0 8 5"><path d="M4 0l4 5H0z" fill="#fff"/></svg>
        <svg class="w-[17px] h-[16px] mr-[19px]" viewBox="0 0 17 16"><path d="M4 1h13q-1 4-6 4H6Q2 6 1 8 0 3 4 1z" fill="#28a8f8"/><path d="M5 7h9q0 4-5 4v3q-4 3-6 1 0-6 2-8z" fill="#1c88f0"/></svg>
        <span class="mr-[12px]">18:30</span>
        <div class="w-[14px] h-full border-l border-[#0e2a4c] bg-linear-to-b from-[#6e8fb0] to-[#274c78]"></div>
    </div>
</footer>

<!-- task button icons -->
<svg class="hidden">
    <symbol id="disk" viewBox="0 0 16 16"><path d="M0 0h16v16H0z" fill="#2430a0"/><path d="M4 0h8v6H4z" fill="#d8dce8"/><path d="M9 1h2v4H9z" fill="#2430a0"/><path d="M2 8h12v8H2z" fill="#fff"/><path d="M3 10.500h10M3 13.500h10" stroke="#d02020"/></symbol>
    <symbol id="note" viewBox="0 0 16 16"><rect x="1" y="1" width="13" height="14" fill="#e8f4fc"/><path d="M2 4h11M2 7h11M2 10h11M2 13h11" stroke="#3e8cc0" stroke-width="1.500"/></symbol>
    <symbol id="eds" viewBox="0 0 16 16"><path d="M3 0h13l-2 9-8 1-2 6H0z" fill="#2fa04a"/><path d="M5 13L7 3h6M6 8h5" fill="none" stroke="#fff" stroke-width="2"/></symbol>
    <symbol id="star" viewBox="0 0 16 16"><path d="M8 0l2 4 6 1-4 4 1 7-5-3-5 3 1-7-4-4 6-1z" fill="#f08a20"/><path d="M5 6l2 5M11 6l-2 5M5 8h6" stroke="#ffe8a0"/></symbol>
    <symbol id="word" viewBox="0 0 16 16"><path d="M5 1h9l2 2v12H5z" fill="#f4f8fc" stroke="#7c98c8" stroke-width=".8"/><path d="M11 5h4M11 8h4M11 11h4M7 13h8" stroke="#7c98c8"/><rect y="1" width="10" height="10" rx="1" fill="#3060b8"/><path d="M2 3l1.500 6L5 4.500 6.500 9 8 3" fill="none" stroke="#fff" stroke-width="1.200"/></symbol>
    <symbol id="gen" viewBox="0 0 16 16"><circle cx="9" cy="8" r="6.500" fill="#187878"/><circle cx="9" cy="9" r="4.500" fill="none" stroke="#48e0d0" stroke-width="2"/><path d="M0 1l8 3-4 6z" fill="#60d060"/><circle cx="9" cy="9" r="1.500" fill="#fff"/></symbol>
</svg>

<script>
    const AQUA = 'bg-[#9bdbdb]', AMBER = 'bg-[#ffc850]', SLATE = 'bg-[#9bb4bc]';
    const blocks = [
        [['sig3t', AMBER], ['ss', AMBER], ['bs', 'bg-[#00a078]'], ['bo', 'bg-white']],
        [['drl', SLATE], ['ldi', SLATE], ['rout', 'bg-[#d8d8d8]']],
        'bp gd1 gg1 gko gm1 tp fzt fzb cs2 ss2 cvia v-cut d to.d ts.d cs.d sig2b.d sig3t.d ss.d bs.d bo.d drl.d rout.d bp.d gd1.d gg1.d gko.d gm1.d tp.d 01'.split(' ').map(n => [n, AQUA])
    ];

    const layers = document.getElementById('layers');
    blocks.forEach(block => {
        const box = document.createElement('div');
        box.className = 'w-[117px] mb-[3px] bg-black border-y border-black pl-[2px]';
        block.forEach(([name, color]) => {
            const active = name === '01';
            const row = document.createElement('label');
            row.className = 'h-[16px] py-[1px] flex gap-[2px] text-[12px] leading-[14px] font-bold';
            row.innerHTML = '<input type="checkbox" class="appearance-none w-[14px] h-[14px] ' +
                (active ? 'border-4 border-[#0000a0] bg-white' : 'border-2 border-white bg-white shadow-[inset_0_0_0_2px_#000]') + '">' +
                '<span class="w-[14px] ' + (active ? 'bg-[#ff0000]' : 'bg-black') + '"></span>' +
                '<span class="w-[81px] pl-[1px] flex justify-between items-center ' + color + '">' + name +
                (active ? '<svg class="w-[5px] h-[5px] mr-[1px]" viewBox="0 0 5 5"><path d="M.5.5h4v4h-4zM2.500 0v5M0 2.500h5" fill="none" stroke="#000" stroke-width=".8"/></svg>' : '') + '</span>';
            box.appendChild(row);
        });
        layers.appendChild(box);
    });

    // drilled vias: x, y, radius
    const vias = [
        [237,93,7],[237,135,7],[163,201,7],[163,306,7],[268,335,4],[158,400,7],[263,449,5],[307,431,7],[307,480,6],
        [169,553,4.5],[274,553,4.5],[169,584,4.5],[169,612,5],[183,639,4.5],[253,639,4.5],[276,670,4.5],[197,705,4.5],
        [218,727,4.5],[195,749,5],[241,749,5],[529,630,5],[593,640,4.5],[659,649,4.5],[530,677,4.5],[658,677,4.5],
        [686,677,4.5],[760,685,4.5],[792,671,4.5],[566,703,4.5],[498,717,5],[688,717,4.5],[794,715,4.5],[566,739,4.5],
        [498,749,5],[615,748,4.5],[688,745,4.5],[545,335,4],[656,399,6],[528,417,4],[496,458,7],[647,458,7],[638,497,7],
        [522,568,7],[639,552,4.5],[522,600,4.5],[639,603,4.5],[578,93,7],[690,93,7],[803,93,7],[578,134,7],[690,134,7],
        [803,133,4.5],[757,173,4.5],[803,173,4.5],[645,205,4.5],[801,270,7],[718,341,7],[731,369,7],[789,415,4.5],
        [789,457,7],[679,493,5],[738,492,4.5],[733,557,4.5],[765,557,4.5],[748,583,4.5],[733,610,4.5],[765,610,4.5]
    ];
    document.getElementById('vias').innerHTML = vias.map(v => `<circle cx="${v[0]}" cy="${v[1]}" r="${v[2]}"/>`).join('');

    const cols = ['J', 'K', 'L', 'M', 'N', 'O', 'P', 'Q', 'R', 'S', ''];
    document.getElementById('cols').innerHTML =
        '<th class="h-[20px] bg-[#a9c4e9] border-r border-b border-[#9eb6ce] p-0"><svg class="block w-[12px] h-[12px] ml-auto mr-[4px]" viewBox="0 0 12 12"><path d="M12 0v12H0z" fill="#e4ecf7"/></svg></th>' +
        cols.map(c => '<th class="h-[20px] p-0 font-normal border-r border-b border-t border-[#9eb6ce] border-t-[#6f93c4] bg-linear-to-b from-[#f6f9fc] to-[#d6dfea]">' + c + '</th>').join('');
    let html = '';
    for (let r = 8; r <= 35; r++) {
        html += '<tr><th class="h-[19px] p-0 font-normal bg-[#e4ecf7] border-r border-b border-[#9eb6ce]">' + r + '</th>' +
            cols.map(() => '<td class="h-[19px] p-0 border-r border-b border-[#d0d7e5]"></td>').join('') + '</tr>';
    }
    document.getElementById('rows').innerHTML = html;

    document.getElementById('tabs').innerHTML =
        ['预审指示', '图1', '图2', '图3', '图4', '图5', '图6', '图7', '图8', '图9'].map((t, i) =>
            '<button class="h-[15px] flex items-center ' + (i ? 'w-[37px] ' : 'w-[73px] pl-[8px] ') + (t === '图3' ? 'bg-white' : '') + '">' +
            (i ? '<svg class="w-[9px] h-[15px]" viewBox="0 0 9 15"><path d="M0 14L9 1" stroke="#8fafd8"/></svg>' : '') + t + '</button>').join('');

    const tasks = [
        ['disk', 'Total C...'], ['note', '制作规...'], ['eds', 'EDS工程...'], ['star', '兴森快...'], ['word', '201309...'], ['gen', 'Genesis'],
        ['xwin', 'Enginee...'], ['xwin', 'Progress'], ['xwin', 'Job Ma...'], ['xwin', 'Drill To...'], ['xwin', 'Graphic...'],
        ['excel', '4C11W...'], ['excel', '4C11W...']
    ];
    document.getElementById('tasks').innerHTML = tasks.map(([icon, text], i) =>
        '<button class="flex items-center gap-[4px] pl-[5px] whitespace-nowrap rounded-[3px] border ' +
        (i > 5 ? 'w-[90px] ' : 'w-[89px] mr-[2px] ') +
        (i === 12 ? 'border-[#c3d3e2] bg-linear-to-b from-[#a9bccf] to-[#7592b2]' : i > 5 ? 'border-[#6f97bb] bg-linear-to-b from-[#5582a8] to-[#2c639a]' : 'border-[#9abdd4] bg-linear-to-b from-[#7aa5c2] to-[#3b79a5]') +
        '"><svg class="w-[16px] h-[16px] shrink-0"><use href="#' + icon + '"/></svg>' + text + '</button>').join('');
</script>
</body>
</html>
